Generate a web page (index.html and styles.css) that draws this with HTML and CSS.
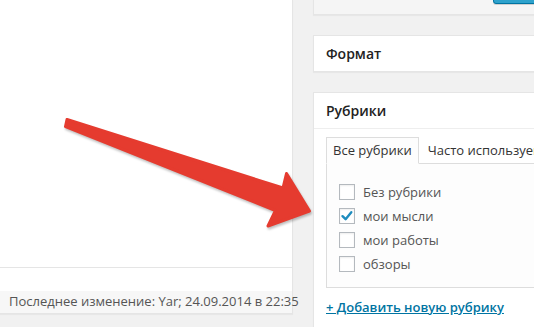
FILE: index.html
```html
<!DOCTYPE html>
<html lang="ru">
<head>
<meta charset="utf-8">
<title>Рубрики</title>
<link rel="stylesheet" href="styles.css">
</head>
<body>
<div class="wrap">
  <div class="main">
    <div class="editor"></div>
    <div class="spacer"></div>
    <div class="status">Последнее изменение: Yar; 24.09.2014 в 22:35</div>
  </div>
  <div class="side">
    <div class="box box-publish">
      <div class="btn-primary"></div>
    </div>
    <div class="box">
      <h3 class="hndle">Формат</h3>
    </div>
    <div class="box">
      <h3 class="hndle hndle-sep">Рубрики</h3>
      <div class="inside">
        <ul class="tabs">
          <li class="tab tab-active">Все рубрики</li>
          <li class="tab">Часто используемые</li>
        </ul>
        <div class="panel">
          <ul class="checklist">
            <li class="cat"><span class="cb"></span><span>Без рубрики</span></li>
            <li class="cat"><span class="cb"><svg class="tick" viewBox="0 0 16 16" width="16" height="16"><path d="M3.5 8.2 L6.6 11.2 L12.3 4.2" fill="none" stroke="#1e8cbe" stroke-width="2.4" stroke-linecap="round" stroke-linejoin="round"/></svg></span><span>мои мысли</span></li>
            <li class="cat"><span class="cb"></span><span>мои работы</span></li>
            <li class="cat"><span class="cb"></span><span>обзоры</span></li>
          </ul>
        </div>
        <a class="add-link" href="#">+ Добавить новую рубрику</a>
      </div>
    </div>
  </div>
</div>
<svg class="arrow" width="534" height="327" viewBox="0 0 534 327">
  <path d="M67 119.5 L283 188 L286.5 173.5 L309.5 211 L268 226 L275.5 210.5 L65.5 126.5 Z" fill="#e53b2f" stroke="#e53b2f" stroke-width="3" stroke-linejoin="round" stroke-linecap="round"/>
</svg>
</body>
</html>
```

FILE: styles.css
```css
html, body {
  margin: 0;
  padding: 0;
}
body {
  background: #f1f1f1;
  font-family: "Open Sans", "Liberation Sans", sans-serif;
  font-size: 13px;
  color: #444;
  overflow: hidden;
  width: 534px;
  height: 327px;
  position: relative;
}
.wrap {
  display: flex;
  gap: 20px;
  width: 600px;
  align-items: flex-start;
}
.main {
  width: 293px;
  box-sizing: border-box;
  background: #fff;
  border-right: 1px solid #e5e5e5;
  border-bottom: 1px solid #e5e5e5;
  box-shadow: 0 1px 1px rgba(0,0,0,0.04);
  display: flex;
  flex-direction: column;
}
.editor {
  height: 267px;
  border-bottom: 1px solid #e5e5e5;
}
.spacer {
  height: 23px;
}
.status {
  height: 22px;
  box-sizing: border-box;
  background: #f7f7f7;
  padding: 1px 9px 2px;
  line-height: 19px;
  text-align: right;
  color: #555;
  white-space: nowrap;
}
.side {
  width: 280px;
  display: flex;
  flex-direction: column;
  gap: 20px;
}
.box {
  background: #fff;
  border: 1px solid #e5e5e5;
  box-shadow: 0 1px 1px rgba(0,0,0,0.04);
}
.box-publish {
  background: #f5f5f5;
  margin-top: -25px;
  padding: 0 19px 10px 0;
  display: flex;
  justify-content: flex-end;
}
.btn-primary {
  width: 80px;
  height: 28px;
  box-sizing: border-box;
  background: #2ea2cc;
  border: 1px solid #0074a2;
  border-radius: 3px;
  box-shadow: inset 0 1px 0 rgba(120,200,230,0.5), 0 1px 0 rgba(0,0,0,0.15);
}
.hndle {
  margin: 0;
  padding: 8px 12px;
  font-size: 14px;
  line-height: 19px;
  font-weight: 600;
  color: #222;
}
.hndle-sep {
  border-bottom: 1px solid #eee;
}
.inside {
  padding: 8px 0 12px 12px;
}
.tabs {
  list-style: none;
  margin: 0;
  padding: 0;
  display: flex;
  gap: 2px;
  border-bottom: 1px solid #ddd;
  white-space: nowrap;
}
.tab {
  padding: 3px 6px;
  line-height: 19px;
  border: 1px solid transparent;
  margin-bottom: -1px;
  color: #333;
}
.tab-active {
  background: #fdfdfd;
  border-color: #ddd;
  border-bottom-color: #fdfdfd;
}
.panel {
  background: #fdfdfd;
  border: 1px solid #ddd;
  border-top: none;
  padding: 16px 12px 11px;
}
.checklist {
  list-style: none;
  margin: 0;
  padding: 0;
}
.cat {
  height: 24px;
  display: flex;
  align-items: center;
  gap: 8px;
  color: #555;
  line-height: 19px;
}
.cb {
  width: 16px;
  height: 16px;
  box-sizing: border-box;
  border: 1px solid #b4b9be;
  background: #fff;
  box-shadow: inset 0 1px 2px rgba(0,0,0,0.07);
  position: relative;
  flex: none;
}
.tick {
  position: absolute;
  left: -1px;
  top: -1px;
}
.add-link {
  display: inline-block;
  margin-top: 10px;
  line-height: 19px;
  color: #0074a2;
  text-decoration: underline;
  font-weight: 600;
}
.arrow {
  position: absolute;
  left: 0;
  top: 0;
  filter: drop-shadow(1px 2px 1px rgba(0,0,0,0.25));
  pointer-events: none;
}
```
